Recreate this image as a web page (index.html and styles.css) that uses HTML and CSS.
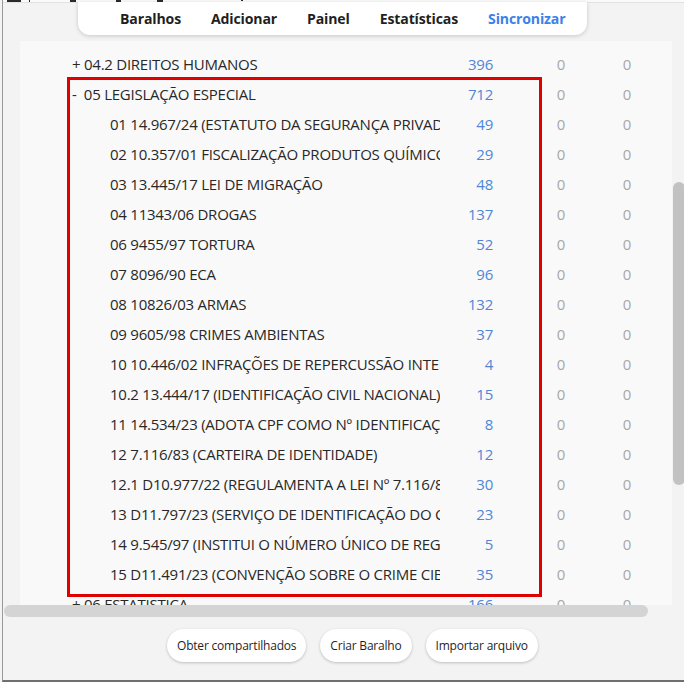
FILE: index.html
```html
<!DOCTYPE html>
<html lang="pt-BR">
<head>
<meta charset="utf-8">
<title>Baralhos</title>
<link rel="stylesheet" href="styles.css">
</head>
<body>
<div class="window">
  <div class="topstrip">
    <span class="mark m1"></span><span class="mark m2"></span><span class="mark m3"></span><span class="mark m4"></span><span class="mark m5"></span><span class="mark m6"></span>
  </div>
  <nav class="nav">
    <span class="nav-item">Baralhos</span>
    <span class="nav-item">Adicionar</span>
    <span class="nav-item">Painel</span>
    <span class="nav-item">Estatísticas</span>
    <span class="nav-item active">Sincronizar</span>
  </nav>
  <section class="panel">
    <div class="row parent"><span class="name">+ 04.2 DIREITOS HUMANOS</span><span class="count">396</span><span class="zero">0</span><span class="zero">0</span></div>
    <div class="row parent"><span class="name">-&nbsp; 05 LEGISLAÇÃO ESPECIAL</span><span class="count">712</span><span class="zero">0</span><span class="zero">0</span></div>
    <div class="row child"><span class="name">01 14.967/24 (ESTATUTO DA SEGURANÇA PRIVADA)</span><span class="count">49</span><span class="zero">0</span><span class="zero">0</span></div>
    <div class="row child"><span class="name">02 10.357/01 FISCALIZAÇÃO PRODUTOS QUÍMICOS</span><span class="count">29</span><span class="zero">0</span><span class="zero">0</span></div>
    <div class="row child"><span class="name">03 13.445/17 LEI DE MIGRAÇÃO</span><span class="count">48</span><span class="zero">0</span><span class="zero">0</span></div>
    <div class="row child"><span class="name">04 11343/06 DROGAS</span><span class="count">137</span><span class="zero">0</span><span class="zero">0</span></div>
    <div class="row child"><span class="name">06 9455/97 TORTURA</span><span class="count">52</span><span class="zero">0</span><span class="zero">0</span></div>
    <div class="row child"><span class="name">07 8096/90 ECA</span><span class="count">96</span><span class="zero">0</span><span class="zero">0</span></div>
    <div class="row child"><span class="name">08 10826/03 ARMAS</span><span class="count">132</span><span class="zero">0</span><span class="zero">0</span></div>
    <div class="row child"><span class="name">09 9605/98 CRIMES AMBIENTAS</span><span class="count">37</span><span class="zero">0</span><span class="zero">0</span></div>
    <div class="row child"><span class="name">10 10.446/02 INFRAÇÕES DE REPERCUSSÃO INTERESTADUAL</span><span class="count">4</span><span class="zero">0</span><span class="zero">0</span></div>
    <div class="row child"><span class="name">10.2 13.444/17 (IDENTIFICAÇÃO CIVIL NACIONAL)</span><span class="count">15</span><span class="zero">0</span><span class="zero">0</span></div>
    <div class="row child"><span class="name">11 14.534/23 (ADOTA CPF COMO Nº IDENTIFICAÇÃO)</span><span class="count">8</span><span class="zero">0</span><span class="zero">0</span></div>
    <div class="row child"><span class="name">12 7.116/83 (CARTEIRA DE IDENTIDADE)</span><span class="count">12</span><span class="zero">0</span><span class="zero">0</span></div>
    <div class="row child"><span class="name">12.1 D10.977/22 (REGULAMENTA A LEI Nº 7.116/83)</span><span class="count">30</span><span class="zero">0</span><span class="zero">0</span></div>
    <div class="row child"><span class="name">13 D11.797/23 (SERVIÇO DE IDENTIFICAÇÃO DO CIDADÃO)</span><span class="count">23</span><span class="zero">0</span><span class="zero">0</span></div>
    <div class="row child"><span class="name">14 9.545/97 (INSTITUI O NÚMERO ÚNICO DE REGISTRO)</span><span class="count">5</span><span class="zero">0</span><span class="zero">0</span></div>
    <div class="row child"><span class="name">15 D11.491/23 (CONVENÇÃO SOBRE O CRIME CIBERNÉTICO)</span><span class="count">35</span><span class="zero">0</span><span class="zero">0</span></div>
    <div class="row parent"><span class="name">+ 06 ESTATISTICA</span><span class="count">166</span><span class="zero">0</span><span class="zero">0</span></div>
  </section>
  <div class="hscroll"></div>
  <div class="vscroll"></div>
  <div class="highlight"></div>
  <footer class="actions">
    <button class="btn">Obter compartilhados</button>
    <button class="btn">Criar Baralho</button>
    <button class="btn">Importar arquivo</button>
  </footer>
</div>
</body>
</html>
```

FILE: styles.css
```css
* { box-sizing: border-box; }
html, body { margin: 0; padding: 0; }
body {
  width: 684px;
  height: 682px;
  overflow: hidden;
  background: #f3f3f3;
  font-family: "Open Sans", "Noto Sans", "Liberation Sans", sans-serif;
  color: #262626;
}
.window {
  position: relative;
  width: 682px;
  height: 682px;
  margin-left: 2px;
  border-left: 1px solid #9a9a9a;
  border-bottom: 2px solid #6f6f6f;
}
.topstrip {
  display: flex;
  align-items: flex-start;
  height: 3px;
  background: #fafafa;
  border-bottom: 1px solid #e2e2e2;
}
.mark {
  height: 2px;
  background: #2a2a2a;
}
.m1 { width: 14px; margin-left: 4px; }
.m2 { width: 1px; margin-left: 8px; }
.m3 { width: 6px; margin-left: 40px; }
.m4 { width: 5px; margin-left: 40px; }
.m5 { width: 6px; margin-left: 36px; }
.m6 { width: 2px; margin-left: 78px; height: 1px; }
.nav {
  display: flex;
  gap: 30px;
  align-items: center;
  width: 509px;
  height: 33px;
  margin: -1px 0 0 75px;
  padding: 0 20px 0 42px;
  background: #fff;
  border-radius: 0 0 12px 12px;
  box-shadow: 0 1px 4px rgba(0,0,0,0.18);
  position: relative;
  z-index: 2;
}
.nav-item {
  font-weight: 700;
  font-size: 14.1px;
  color: #1f1f1f;
  letter-spacing: -0.15px;
}
.nav-item.active { color: #3b82e8; }
.panel {
  width: 652px;
  height: 564px;
  margin: 6px 0 0 17px;
  padding-top: 8px;
  background: #f9f9f9;
  overflow: hidden;
}
.row {
  display: flex;
  align-items: center;
  height: 30px;
  font-size: 15px;
  letter-spacing: -0.25px;
}
.name {
  width: 420px;
  padding-left: 52px;
  white-space: nowrap;
  overflow: hidden;
  color: #282828;
}
.child .name { padding-left: 90px; }
.count {
  width: 53px;
  text-align: right;
  color: #4f86d8;
}
.zero {
  width: 68px;
  text-align: center;
  color: #a8a8a8;
}
.zero:last-child { width: 64px; }
.count + .zero { margin-left: 34px; }
.hscroll {
  position: absolute;
  left: 1px;
  top: 605px;
  width: 644px;
  height: 12px;
  border-radius: 6px;
  background: #d4d4d4;
}
.vscroll {
  position: absolute;
  left: 670px;
  top: 182px;
  width: 12px;
  height: 303px;
  border-radius: 6px;
  background: #c2c2c2;
}
.highlight {
  position: absolute;
  left: 64px;
  top: 77px;
  width: 475px;
  height: 520px;
  border: 3px solid #e10000;
  pointer-events: none;
}
.actions {
  display: flex;
  gap: 14px;
  margin-top: 24px;
  padding-left: 164px;
}
.btn {
  height: 33px;
  padding: 0 10px;
  border: none;
  border-radius: 17px;
  background: #fff;
  box-shadow: 0 1px 3px rgba(0,0,0,0.22);
  font-family: "Open Sans", "Noto Sans", "Liberation Sans", sans-serif;
  font-size: 12px;
  color: #1f1f1f;
  letter-spacing: -0.2px;
}
```
